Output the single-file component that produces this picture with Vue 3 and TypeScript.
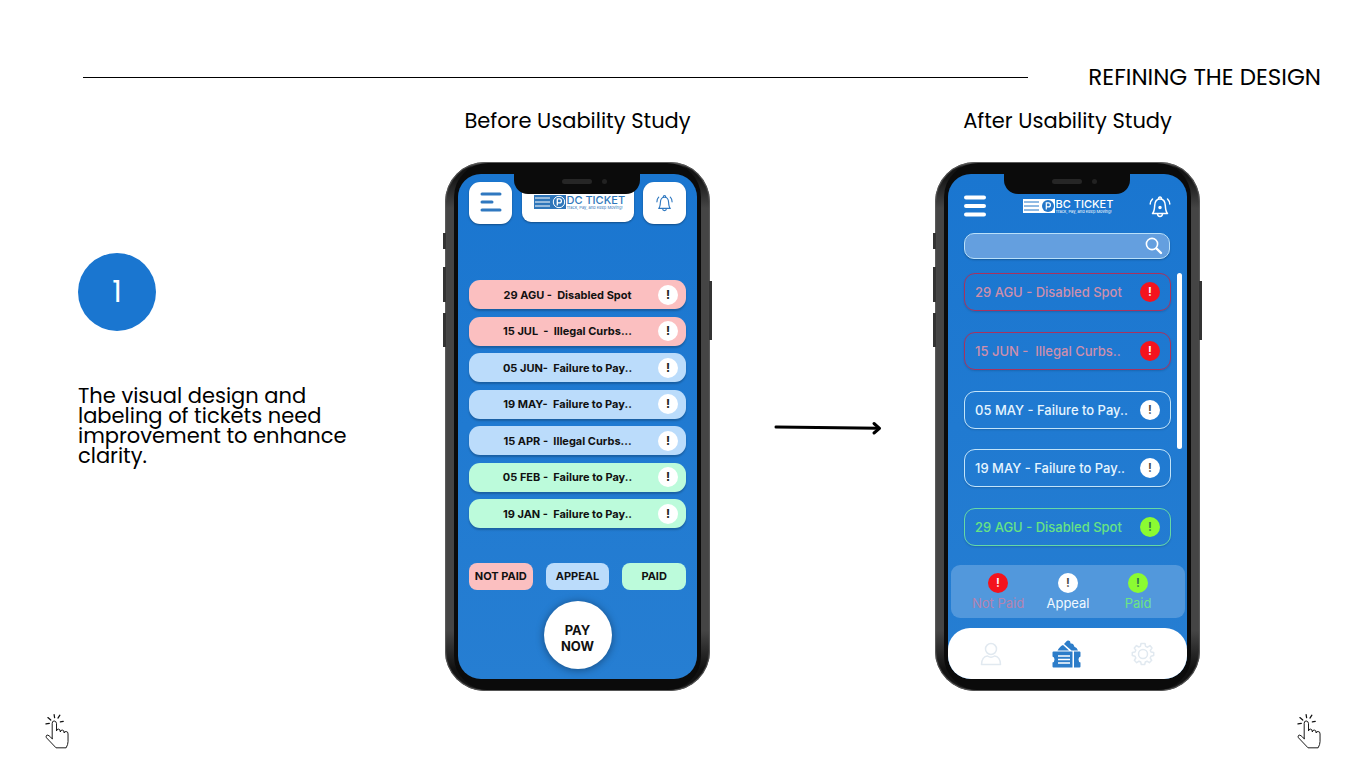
<script setup lang="ts">
type Status = 'unpaid' | 'appeal' | 'paid'

interface Ticket {
  label: string
  status: Status
}

const beforeTickets: Ticket[] = [
  { label: '29 AGU -  Disabled Spot', status: 'unpaid' },
  { label: '15 JUL  -  Illegal Curbs...', status: 'unpaid' },
  { label: '05 JUN-  Failure to Pay..', status: 'appeal' },
  { label: '19 MAY-  Failure to Pay..', status: 'appeal' },
  { label: '15 APR -  Illegal Curbs...', status: 'appeal' },
  { label: '05 FEB -  Failure to Pay..', status: 'paid' },
  { label: '19 JAN -  Failure to Pay..', status: 'paid' },
]

const beforeLegend: Ticket[] = [
  { label: 'NOT PAID', status: 'unpaid' },
  { label: 'APPEAL', status: 'appeal' },
  { label: 'PAID', status: 'paid' },
]

const afterTickets: Ticket[] = [
  { label: '29 AGU - Disabled Spot', status: 'unpaid' },
  { label: '15 JUN -  Illegal Curbs..', status: 'unpaid' },
  { label: '05 MAY - Failure to Pay..', status: 'appeal' },
  { label: '19 MAY - Failure to Pay..', status: 'appeal' },
  { label: '29 AGU - Disabled Spot', status: 'paid' },
]

const afterLegend: Ticket[] = [
  { label: 'Not Paid', status: 'unpaid' },
  { label: 'Appeal', status: 'appeal' },
  { label: 'Paid', status: 'paid' },
]
</script>

<template>
  <div class="slide">
    <header class="top">
      <div class="rule"></div>
      <h1>REFINING THE DESIGN</h1>
    </header>

    <main class="content">
      <section class="note">
        <div class="step">1</div>
        <p>The visual design and<br />labeling of tickets need<br />improvement to enhance<br />clarity.</p>
      </section>

      <section class="study">
        <h2>Before Usability Study</h2>
        <div class="phone">
          <i class="key key-mute"></i><i class="key key-up"></i><i class="key key-down"></i><i class="key key-power"></i>
          <div class="bezel">
            <div class="notch"><span class="speaker"></span><span class="camera"></span></div>
            <div class="screen screen-before">
              <div class="cards">
                <button class="card" type="button" aria-label="Menu">
                  <svg width="24" height="22" viewBox="0 0 24 22" fill="none" stroke="#2f78c0" stroke-width="3" stroke-linecap="round">
                    <path d="M3 2H21M3 10H13M3 18H21" />
                  </svg>
                </button>
                <div class="card-logo">
                  <div class="logo logo-dc">
                    <svg width="32" height="14" viewBox="0 0 32 14">
                      <rect width="32" height="14" fill="#2f76ba" />
                      <path d="M1 3H16M1 7H16M1 11H16" stroke="#fff" stroke-width="1" />
                      <circle cx="25" cy="7" r="5.700" fill="none" stroke="#fff" stroke-width="1" />
                      <path d="M23.300 10.500V3.900H25.400A2 2 0 0 1 25.400 7.900H23.300" fill="none" stroke="#fff" stroke-width="1.300" />
                    </svg>
                    <div class="brand"><strong>DC TICKET</strong><small>Track, Pay, and Keep Moving!</small></div>
                  </div>
                </div>
                <button class="card" type="button" aria-label="Notifications">
                  <svg width="17" height="18" viewBox="0 0 22 23" fill="none" stroke="#2f78c0" stroke-width="1.500" stroke-linecap="round" stroke-linejoin="round">
                    <path d="M3.500 18.500H18.500C16.600 16.700 16.500 14.500 16.300 10.500C16.100 6.300 14.300 4 11 4S5.900 6.300 5.700 10.500C5.500 14.500 5.400 16.700 3.500 18.500Z" />
                    <path d="M9.500 4C9.300 1.200 12.700 1.200 12.500 4M8.500 18.700C8.700 22.300 13.300 22.300 13.500 18.700M3.500 4C2 5.500 1.200 7 1.200 10M18.500 4C20 5.500 20.800 7 20.800 10" />
                  </svg>
                </button>
              </div>

              <ul class="list list-before">
                <li v-for="t in beforeTickets" :key="t.label">
                  <button type="button" class="ticket" :class="t.status">
                    <span class="ticket-text">{{ t.label }}</span><span class="badge">!</span>
                  </button>
                </li>
              </ul>

              <div class="legend-before">
                <span v-for="l in beforeLegend" :key="l.label" :class="l.status">{{ l.label }}</span>
              </div>
              <button class="pay" type="button">PAY<br />NOW</button>
            </div>
          </div>
        </div>
      </section>

      <div class="arrow">
        <svg width="108" height="16" viewBox="0 0 108 16" fill="none" stroke="#000" stroke-linecap="round" stroke-linejoin="round">
          <path d="M2 7L105 8.300" stroke-width="3" />
          <path d="M100 3.500L105.500 8.300L100 13" stroke-width="3" />
        </svg>
      </div>

      <section class="study">
        <h2>After Usability Study</h2>
        <div class="phone">
          <i class="key key-mute"></i><i class="key key-up"></i><i class="key key-down"></i><i class="key key-power"></i>
          <div class="bezel">
            <div class="notch"><span class="speaker"></span><span class="camera"></span></div>
            <div class="screen screen-after">
              <div class="bar">
                <button class="plain" type="button" aria-label="Menu">
                  <svg width="24" height="24" viewBox="0 0 24 24" fill="none" stroke="#fff" stroke-width="4" stroke-linecap="round">
                    <path d="M3 3.500H21M3 12H21M3 20.500H21" />
                  </svg>
                </button>
                <div class="logo logo-bc">
                  <svg width="32" height="14" viewBox="0 0 32 14">
                    <rect width="32" height="14" fill="#fff" />
                    <path d="M1 3H16M1 7H16M1 11H16" stroke="#2376c8" stroke-width="1" />
                    <circle cx="25" cy="7" r="6" fill="#2376c8" />
                    <path d="M23.300 10.500V3.900H25.400A2 2 0 0 1 25.400 7.900H23.300" fill="none" stroke="#fff" stroke-width="1.200" />
                  </svg>
                  <div class="brand"><strong>BC TICKET</strong><small>Track, Pay, and Keep Moving!</small></div>
                </div>
                <button class="plain" type="button" aria-label="Notifications">
                  <svg width="22" height="23" viewBox="0 0 22 23" fill="none" stroke="#fff" stroke-width="1.500" stroke-linecap="round" stroke-linejoin="round">
                    <path d="M3.500 18.500H18.500C16.600 16.700 16.500 14.500 16.300 10.500C16.100 6.300 14.300 4 11 4S5.900 6.300 5.700 10.500C5.500 14.500 5.400 16.700 3.500 18.500Z" />
                    <path d="M9.500 4C9.300 1.200 12.700 1.200 12.500 4M8.500 18.700C8.700 22.300 13.300 22.300 13.500 18.700M3.500 4C2 5.500 1.200 7 1.200 9M18.500 4C20 5.500 20.800 7 20.800 9" />
                    <circle cx="11" cy="12.500" r="1" fill="#fff" />
                  </svg>
                </button>
              </div>

              <div class="search">
                <input type="search" aria-label="Search tickets" />
                <svg width="18" height="18" viewBox="0 0 18 18" fill="none" stroke="#fff" stroke-linecap="round">
                  <circle cx="7" cy="7" r="5.600" stroke-width="1.600" />
                  <path d="M11.500 11.500L16 16" stroke-width="2.400" />
                </svg>
              </div>

              <div class="scroll-area">
                <ul class="list list-after">
                  <li v-for="(t, i) in afterTickets" :key="i">
                    <button type="button" class="outline" :class="t.status">
                      <span>{{ t.label }}</span><span class="badge">!</span>
                    </button>
                  </li>
                </ul>
                <div class="thumb"></div>
              </div>

              <div class="legend-after">
                <div v-for="l in afterLegend" :key="l.label" :class="l.status">
                  <span class="badge">!</span><span>{{ l.label }}</span>
                </div>
              </div>

              <nav class="tabs">
                <button class="plain" type="button" aria-label="Profile">
                  <svg width="22" height="24" viewBox="0 0 22 24" fill="none" stroke="#e1e9f0" stroke-width="1.500" stroke-linejoin="round">
                    <circle cx="11" cy="7" r="5.500" />
                    <path d="M1.500 22.500C1.500 17.500 4 14 7.500 14Q11 16.500 14.500 14C18 14 20.500 17.500 20.500 22.500Z" />
                  </svg>
                </button>
                <button class="plain" type="button" aria-label="Tickets">
                  <svg width="29" height="28" viewBox="0 0 29 28" fill="#2d7dc9">
                    <path d="M5.500 10.500Q8 6 11 5L17 10.500ZM12 4L15 .8Q16.500 -.2 18 1.200L18.600 3.600Q20.500 3.400 21.600 4.700L22.400 6.700Q25 7.500 26 10.500H19.500Z" />
                    <path d="M1.500 11.500H20.500V27.500H1.500Q.5 27.500 .5 26.500V22.500Q2.500 22 2.500 19.500T.5 16.500V12.500Q.5 11.500 1.500 11.500ZM22 11.500H27.500Q28.500 11.500 28.500 12.500V16.500Q26.500 17 26.500 19.500T28.500 22.500V26.500Q28.500 27.500 27.500 27.500H22Z" />
                    <path d="M6 16H18M6 19.500H18M6 23H18" stroke="#fff" stroke-width="1.300" />
                  </svg>
                </button>
                <button class="plain" type="button" aria-label="Settings">
                  <svg width="24" height="24" viewBox="0 0 24 24" fill="none" stroke="#e1e9f0" stroke-width="1.500" stroke-linejoin="round">
                    <circle cx="12" cy="12" r="4.500" />
                    <path d="M10 1.500H14L14.600 4.400L16.500 5.200L19 3.600L21 6L19.300 8.400L20 10L22.700 10.500V13.500L20 14.200L19.200 16L20.700 18.300L18.300 20.700L16 19.200L14.300 20L13.700 22.600H10.300L9.700 20L8 19.200L5.700 20.700L3.300 18.300L4.800 16L4 14.200L1.300 13.500V10.500L4 10L4.800 8.200L3.300 6L5.500 3.600L7.800 5L9.400 4.400Z" />
                  </svg>
                </button>
              </nav>
            </div>
          </div>
        </div>
      </section>
    </main>

    <footer class="hands">
      <svg v-for="n in 2" :key="n" width="24" height="37" viewBox="0 0 25 37" fill="none" stroke="#111" stroke-width="1" stroke-linecap="round" stroke-linejoin="round">
        <path d="M7.500 26V10Q7.500 7.500 9.500 7.500T12 10V18Q12 16 14 16T16 19Q16 17 18 17T20 20Q20 18.500 22 18.500T24 21V29Q24 32 22 35.500H11.500L1.500 25Q.5 23 2 22.300T7.500 26Z" />
        <path d="M9.500 1L10 4M15.500 1.500L13.500 4.500M3 4L6 6.500M1 10.500L4.500 10M16 8.500L19 8" stroke-width="1.300" />
      </svg>
    </footer>
  </div>
</template>

<style>
body {
  margin: 0;
  background: #fff;
}
</style>

<style scoped>
.slide {
  box-sizing: border-box;
  min-height: 100vh;
  display: flex;
  flex-direction: column;
  padding: 62px 45px 18px;
  background: #fff;
  color: #000;
  font-family: Poppins, Inter, "Liberation Sans", sans-serif;
}
h1, h2, p, ul {
  margin: 0;
  padding: 0;
}
button {
  font: inherit;
  color: inherit;
  border: 0;
  padding: 0;
  cursor: pointer;
}
svg {
  display: block;
  flex: none;
}
.top {
  display: flex;
  align-items: center;
  gap: 60px;
  padding-left: 38px;
}
.rule {
  flex: 1;
  height: 1px;
  background: #000;
}
h1, h2 {
  font-size: 23px;
  line-height: 30px;
  font-weight: 400;
  white-space: nowrap;
}
h2 {
  font-size: 21px;
}
.content {
  display: grid;
  grid-template-columns: 367fr 265px 225fr 265px;
  padding: 14px 121px 0 33px;
}
.note {
  padding-top: 147px;
}
.step {
  display: flex;
  align-items: center;
  justify-content: center;
  width: 78px;
  height: 78px;
  border-radius: 50%;
  background: #1a76d0;
  color: #fff;
  font-size: 30px;
}
.note p {
  margin-top: 55px;
  font-size: 21px;
  line-height: 20px;
}
.study {
  display: flex;
  flex-direction: column;
  align-items: center;
  gap: 26px;
}
.arrow {
  display: flex;
  justify-content: center;
  padding: 314px 0 0 10px;
}
.phone {
  position: relative;
  box-sizing: border-box;
  width: 100%;
  padding: 1px 9px;
  border-radius: 40px;
  background: linear-gradient(#555 0, #111 6px, #161616 16px, #454545 46px, #454545 calc(100% - 60px), #111 calc(100% - 22px), #151515 100%);
  box-shadow: inset 0 0 1px 1px #5c5c5c;
}
.bezel {
  position: relative;
  padding: 11px 4px;
  border-radius: 34px;
  background: #0b0b0b;
}
.key {
  position: absolute;
  left: -2px;
  width: 3px;
  background: #333;
}
.key-mute { top: 71px; height: 16px; }
.key-up { top: 105px; height: 35px; }
.key-down { top: 151px; height: 34px; }
.key-power { left: auto; right: -2px; top: 119px; height: 59px; }
.notch {
  position: absolute;
  z-index: 2;
  top: 8px;
  left: 60px;
  width: 126px;
  height: 23px;
  border-radius: 0 0 14px 14px;
  background: #0b0b0b;
}
.speaker {
  position: absolute;
  left: 48px;
  top: 8px;
  width: 30px;
  height: 5px;
  border-radius: 3px;
  background: #262626;
}
.camera {
  position: absolute;
  left: 88px;
  top: 8px;
  width: 5px;
  height: 5px;
  border-radius: 50%;
  background: #222;
}
.screen {
  display: flex;
  flex-direction: column;
  overflow: hidden;
  border-radius: 23px;
  background: linear-gradient(#1a76d0, #267ed2);
  font-family: Inter, "Liberation Sans", sans-serif;
}
.screen-before {
  padding: 8px 11px 10px;
}
.cards {
  display: flex;
  justify-content: space-between;
}
.card {
  display: flex;
  align-items: center;
  justify-content: center;
  width: 43px;
  height: 42px;
  border-radius: 11px;
  background: #fff;
  box-shadow: 0 1px 2px rgba(0, 0, 0, .35);
}
.card-logo {
  box-sizing: border-box;
  width: 112px;
  height: 40px;
  padding: 13px 0 0 12px;
  border-radius: 9px;
  background: #fff;
  box-shadow: 0 1px 2px rgba(0, 0, 0, .35);
}
.logo {
  display: flex;
  gap: 1px;
}
.logo-dc {
  color: #2f76ba;
}
.logo-bc {
  color: #fff;
}
.brand {
  display: flex;
  flex-direction: column;
}
.brand strong {
  font-size: 11px;
  line-height: 11px;
  font-weight: 500;
  white-space: nowrap;
}
.brand small {
  font-size: 4px;
  line-height: 4px;
  white-space: nowrap;
}
.list {
  display: flex;
  flex-direction: column;
  justify-content: space-between;
  list-style: none;
}
.list-before {
  height: 248px;
  margin-top: 56px;
}
.ticket {
  display: flex;
  align-items: center;
  width: 100%;
  height: 29px;
  padding: 0 8px;
  border-radius: 11px;
  color: #111;
  font-size: 11px;
  font-weight: 700;
  box-shadow: 0 2px 2px rgba(0, 0, 0, .22);
}
.ticket-text {
  flex: 1;
  text-align: center;
  white-space: pre;
}
.badge {
  display: flex;
  align-items: center;
  justify-content: center;
  flex: none;
  width: 20px;
  height: 20px;
  border-radius: 50%;
  background: #fff;
  color: #222;
  font-size: 12px;
  line-height: 20px;
  font-weight: 700;
}
.ticket.unpaid, .legend-before .unpaid { background: #fbbfc0; }
.ticket.appeal, .legend-before .appeal { background: #bbdcfb; }
.ticket.paid, .legend-before .paid { background: #bcfbdb; }
.legend-before {
  display: grid;
  grid-template-columns: repeat(3, 1fr);
  gap: 13px;
  margin-top: 35px;
}
.legend-before span {
  border-radius: 8px;
  color: #111;
  text-align: center;
  font-size: 11px;
  line-height: 27px;
  font-weight: 700;
  white-space: nowrap;
}
.pay {
  align-self: center;
  width: 68px;
  height: 68px;
  margin-top: 11px;
  padding-top: 6px;
  border-radius: 50%;
  background: #fff;
  color: #111;
  font-size: 13px;
  line-height: 16px;
  font-weight: 700;
  box-shadow: 0 1px 8px rgba(0, 0, 0, .4);
}
.screen-after {
  padding-top: 20px;
}
.plain {
  background: none;
}
.bar {
  display: flex;
  align-items: center;
  justify-content: space-between;
  height: 24px;
  padding: 0 16px 0 15px;
}
.search {
  box-sizing: border-box;
  display: flex;
  align-items: center;
  height: 26px;
  margin: 15px 17px 0 16px;
  padding-right: 6px;
  border: 1px solid #b9e0fa;
  border-radius: 10px;
  background: #649fdf;
  box-shadow: 0 1px 2px rgba(0, 0, 0, .25);
}
.search input {
  flex: 1;
  min-width: 0;
  border: 0;
  padding: 0 8px;
  background: none;
  color: #fff;
  font: inherit;
  font-size: 13px;
  outline: 0;
}
.scroll-area {
  display: flex;
  gap: 6px;
  margin-top: 14px;
  padding: 0 5px 0 16px;
}
.list-after {
  flex: 1;
  height: 273px;
}
.outline {
  box-sizing: border-box;
  display: flex;
  align-items: center;
  justify-content: space-between;
  width: 100%;
  height: 38px;
  padding: 0 10px;
  border: 1px solid;
  border-radius: 11px;
  background: none;
  font-size: 13px;
  font-weight: 500;
  white-space: pre;
  box-shadow: 0 1px 2px rgba(0, 0, 0, .15);
}
.outline.unpaid { border-color: #a8325f; color: #cf8fac; }
.outline.appeal { border-color: #c3e4fa; color: #e6f5ff; }
.outline.paid { border-color: #65d9a5; color: #67e384; }
.outline .badge, .legend-after .badge {
  font-weight: 600;
}
.outline.unpaid .badge, .legend-after .unpaid .badge { background: #f4131d; color: #fff; }
.outline.appeal .badge, .legend-after .appeal .badge { background: #fff; color: #444; }
.outline.paid .badge, .legend-after .paid .badge { background: #8bfb32; color: #2d7050; }
.thumb {
  width: 5px;
  height: 176px;
  border-radius: 3px;
  background: #fff;
}
.legend-after {
  display: grid;
  grid-template-columns: repeat(3, 70px);
  justify-content: center;
  height: 53px;
  margin: 19px 2px 0 3px;
  border-radius: 9px;
  background: #5298dc;
}
.legend-after div {
  display: flex;
  flex-direction: column;
  align-items: center;
  padding-top: 8px;
  font-size: 13px;
  line-height: 20px;
}
.legend-after .unpaid { color: #b583b0; }
.legend-after .appeal { color: #f0f8ff; }
.legend-after .paid { color: #6ee483; }
.tabs {
  display: flex;
  align-items: center;
  justify-content: space-between;
  height: 51px;
  margin-top: 10px;
  padding: 0 32px;
  border-radius: 22px 22px 0 0;
  background: #fff;
}
.hands {
  display: flex;
  justify-content: space-between;
  margin-top: auto;
}
</style>
